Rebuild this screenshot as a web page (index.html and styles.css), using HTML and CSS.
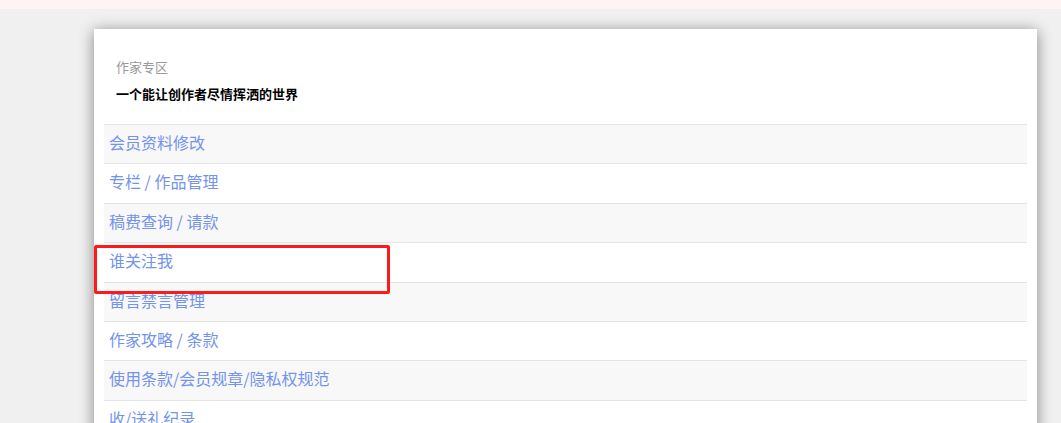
FILE: index.html
```html
<!DOCTYPE html>
<html lang="zh-CN">
<head>
    <meta charset="UTF-8">
    <meta name="viewport" content="width=device-width, initial-scale=1.0">
    <title>作家专区</title>
    <link rel="stylesheet" href="styles.css">
</head>
<body>
    <div class="topbar"></div>
    <main class="page">
        <section class="card">
            <div class="card-head">
                <p class="zone">作家专区</p>
                <p class="slogan">一个能让创作者尽情挥洒的世界</p>
            </div>
            <ul class="menu">
                <li><a href="#">会员资料修改</a></li>
                <li><a href="#">专栏 / 作品管理</a></li>
                <li><a href="#">稿费查询 / 请款</a></li>
                <li><a href="#">谁关注我</a></li>
                <li><a href="#">留言禁言管理</a></li>
                <li><a href="#">作家攻略 / 条款</a></li>
                <li><a href="#">使用条款/会员规章/隐私权规范</a></li>
                <li><a href="#">收/送礼纪录</a></li>
            </ul>
            <div class="highlight"></div>
        </section>
    </main>
</body>
</html>
```

FILE: styles.css
```css
body {
    margin: 0;
    background-color: #f0f0f0;
    font-family: "Noto Sans CJK SC", "Noto Sans", sans-serif;
    overflow: hidden;
}

.topbar {
    height: 9px;
    background-color: #fff3f3;
}

.page {
    padding: 20px 24px 0 94px;
}

.card {
    position: relative;
    background-color: #ffffff;
    padding: 0 10px;
    box-shadow: 0 2px 14px rgba(0, 0, 0, 0.45);
    height: 420px;
}

.card-head {
    padding: 28px 12px 20px;
}

.card-head p {
    margin: 0;
    font-size: 13px;
    line-height: 20px;
}

.zone {
    color: #999999;
}

.slogan {
    margin-top: 7px !important;
    color: #000000;
    font-weight: bold;
}

.menu {
    list-style: none;
    margin: 0;
    padding: 0;
}

.menu li {
    border-top: 1px solid #e4e4e4;
    line-height: 34.4px;
    padding: 0 0 4px 5px;
}

.menu li:nth-child(odd) {
    background-color: #f8f8f8;
}

.menu a {
    color: #7393ec;
    font-size: 16px;
    text-decoration: none;
}

.highlight {
    position: absolute;
    left: 0;
    top: 216px;
    width: 290px;
    height: 43px;
    border: 3px solid #ff1a1a;
    border-radius: 2px;
}
```
